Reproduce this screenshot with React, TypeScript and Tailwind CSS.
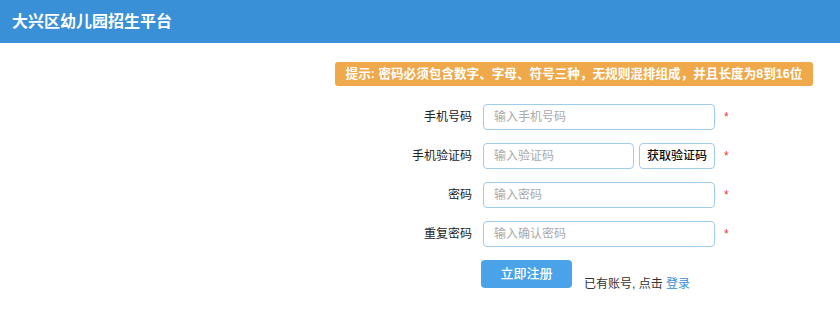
const font = "font-['Helvetica_Neue','Liberation_Sans','Noto_Sans_CJK_SC',sans-serif]";

interface FieldProps {
  label: string;
  placeholder: string;
  type?: string;
  withCode?: boolean;
}

function Field({ label, placeholder, type = "text", withCode }: FieldProps) {
  return (
    <div className="flex h-[26px] items-center">
      <label className="w-[72px] pr-[11px] text-right text-[12px] text-[#222]">{label}</label>
      <div className="flex w-[232px] gap-[5px]">
        <input
          type={type}
          placeholder={placeholder}
          className="h-[26px] min-w-0 flex-1 rounded-[4px] border border-[#9fcbec] px-[10px] text-[12px] text-[#333] outline-none placeholder:text-[#aaa]"
        />
        {withCode && (
          <button className="h-[26px] w-[76px] rounded-[4px] border border-[#9fcbec] bg-white text-[12px] font-medium text-[#111]">
            获取验证码
          </button>
        )}
      </div>
      <span className="ml-[9px] text-[12px] text-[#e4393c]">*</span>
    </div>
  );
}

export default function App() {
  return (
    <div className={`min-h-[310px] bg-white ${font}`}>
      <header className="flex h-[43px] items-center bg-[#3a90d7] px-[12px]">
        <h1 className="text-[16px] font-semibold text-white">大兴区幼儿园招生平台</h1>
      </header>

      <div className="flex justify-end pr-[27px] pt-[19px]">
        <div className="flex h-[24px] w-[478px] items-center justify-center rounded-[3px] bg-[#efa84a] text-[12.6px] font-bold text-white">
          提示: 密码必须包含数字、字母、符号三种，无规则混排组成，并且长度为8到16位
        </div>
      </div>

      <form className="ml-[411px] mt-[18px] flex flex-col gap-[13px]">
        <Field label="手机号码" placeholder="输入手机号码" />
        <Field label="手机验证码" placeholder="输入验证码" withCode />
        <Field label="密码" placeholder="输入密码" type="password" />
        <Field label="重复密码" placeholder="输入确认密码" type="password" />
        <div className="flex items-end pl-[70px]">
          <button
            type="button"
            className="h-[28px] w-[91px] rounded-[4px] bg-[#4aa3e8] text-[13px] font-medium text-white"
          >
            立即注册
          </button>
          <span className="mb-[-5px] ml-[12px] text-[12px] text-[#333]">
            已有账号, 点击 <a className="text-[#3a90d7]">登录</a>
          </span>
        </div>
      </form>
    </div>
  );
}
